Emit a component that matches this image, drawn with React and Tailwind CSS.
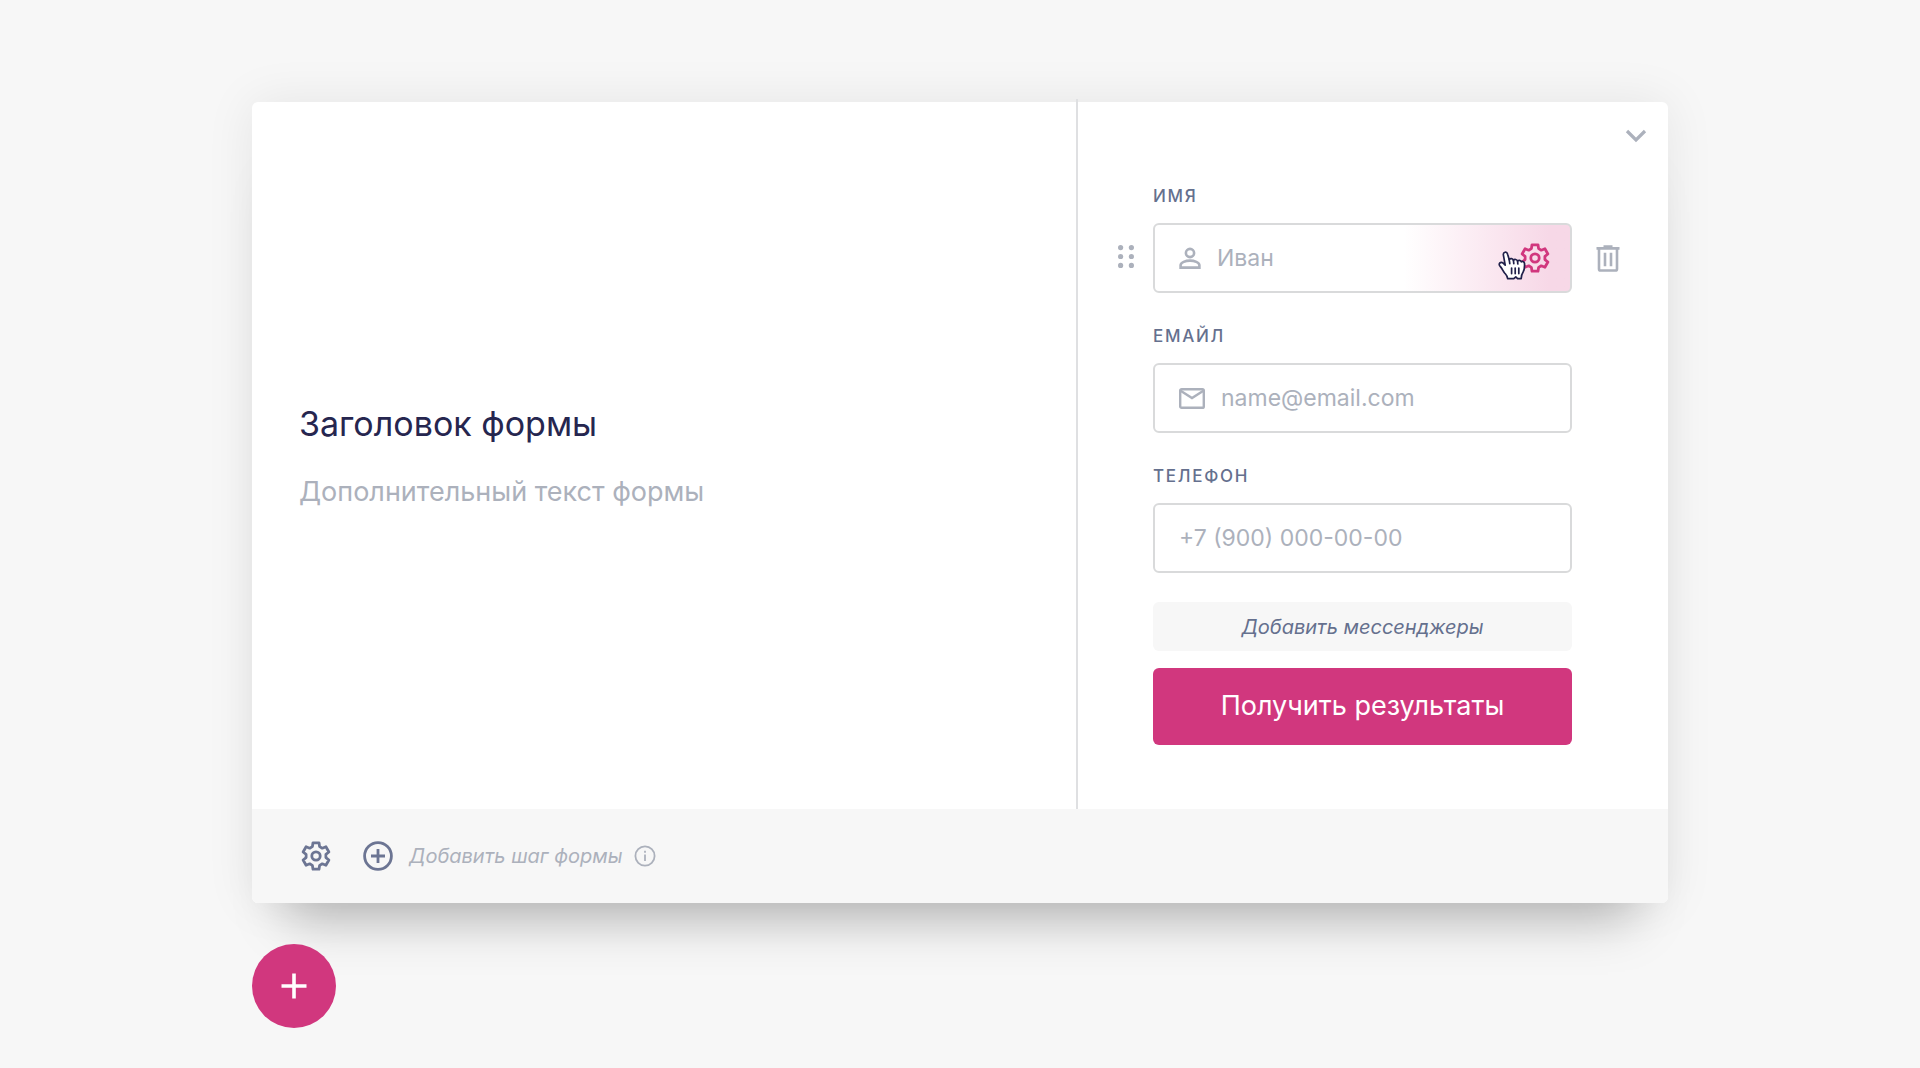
const ICON_GEAR =
  'M-3 -13.2H3L3.6 -9.4L6.3 -7.8L9.9 -9.2L12.9 -4L9.9 -1.6V1.6L12.9 4L9.9 9.2L6.3 7.8L3.6 9.4L3 13.2H-3L-3.6 9.4L-6.3 7.8L-9.9 9.2L-12.9 4L-9.9 1.6V-1.6L-12.9 -4L-9.9 -9.2L-6.3 -7.8L-3.6 -9.4Z'

function GearIcon({ className }) {
  return (
    <svg className={`h-[30px] w-[30px] ${className}`} viewBox="-15 -15 30 30" fill="none" stroke="currentColor" strokeWidth="2.8" strokeLinejoin="round">
      <path d={ICON_GEAR} />
      <circle r="4.2" />
    </svg>
  )
}

function UserIcon() {
  return (
    <svg className="h-6 w-[22px] shrink-0" viewBox="0 0 22 24" fill="none" stroke="currentColor" strokeWidth="2.6">
      <circle cx="11" cy="7" r="4.1" />
      <path d="M1.6 21.600v-2.400c0-2.800 5-4.600 9.400-4.600s9.400 1.800 9.400 4.600v2.400z" />
    </svg>
  )
}

function MailIcon() {
  return (
    <svg className="h-6 w-[26px] shrink-0" viewBox="0 0 26 24" fill="none" stroke="currentColor" strokeWidth="2.4">
      <rect x="1.2" y="3.200" width="23.600" height="18.600" rx="1.4" />
      <path d="M1.6 4.800L13 12l11.400-7.200" />
    </svg>
  )
}

function TrashIcon() {
  return (
    <svg className="h-[27px] w-6" viewBox="0 0 24 27" fill="none" stroke="currentColor" strokeWidth="2.6">
      <path d="M0.500 3.400h23M7.500 1.600h9" />
      <path d="M3 3.400v20.500a1.600 1.600 0 001.600 1.600h14.800a1.600 1.600 0 001.600-1.600V3.400" />
      <path d="M9 7.800v13.400M15 7.800v13.400" />
    </svg>
  )
}

function DragIcon() {
  return (
    <svg className="h-[23px] w-4" viewBox="0 0 16 23" fill="currentColor">
      {[2.6, 11.5, 20.4].map((y) => (
        <g key={y}>
          <circle cx="2.6" cy={y} r="2.6" />
          <circle cx="13.4" cy={y} r="2.6" />
        </g>
      ))}
    </svg>
  )
}

function HandCursor({ className }) {
  return (
    <svg className={`h-[30px] w-7 ${className}`} viewBox="0 0 28 30" fill="white" stroke="#20204a" strokeWidth="1.7" strokeLinejoin="round" strokeLinecap="round">
      <path d="M9.600 27.600c0-2.600-1.200-3.600-2.800-5.400-1.800-2.200-2.600-4.600-4.600-6.800-2.600-2.800.600-5.200 3-3.200l2 2L5.400 4.200C4.800.8 8.800 0 9.600 3.200L11.200 8.600c1.400-1.600 3.400-1 4.200.6 1.200-1.400 3.400-.8 4.200.8 1.200-1.200 3-.8 3.800.8 1.400-.8 2.900 0 3.100 1.600.2 3.400.1 6.400-1.500 8.800-1.400 2-1.800 3.400-1.800 6.400h-3.600l-1.800-1.800-2 1.800z" />
      <path d="M11.200 8.600l.6 4M15.400 9.200l.4 3.400M19.600 10l.2 3M13.600 17v5.600M17.200 17v5.600M20.800 17v5.600" fill="none" />
    </svg>
  )
}

function Field({ id, label, type, placeholder, icon, active }) {
  return (
    <div className="grid grid-cols-[75px_minmax(0,1fr)_96px] gap-y-[17px] items-center">
      <label htmlFor={id} className="col-start-2 text-[17px] leading-5 font-medium tracking-widest uppercase text-[#65708e]">
        {label}
      </label>

      {active && (
        <button type="button" aria-label="Переместить" className="col-start-1 row-start-2 justify-self-end mr-[19px] mb-1">
          <DragIcon />
        </button>
      )}

      <div
        className={`relative col-start-2 row-start-2 h-[70px] flex items-center gap-4 px-6 rounded-md border-2 border-[#d9dadb] ${
          active ? 'bg-linear-to-r from-white from-60% to-[#f7d8e7] to-95%' : 'bg-white'
        }`}
      >
        {icon}
        <input
          id={id}
          type={type}
          placeholder={placeholder}
          className="min-w-0 flex-1 bg-transparent text-[23px] text-[#26264f] placeholder:text-[#acb1bc] outline-none"
        />
        {active && (
          <>
            <button type="button" aria-label="Настройки поля" className="-mr-1 text-[#d1377e]">
              <GearIcon />
            </button>
            <HandCursor className="absolute right-11 top-[26px] pointer-events-none" />
          </>
        )}
      </div>

      {active && (
        <button type="button" aria-label="Удалить" className="col-start-3 row-start-2 ml-6 justify-self-start">
          <TrashIcon />
        </button>
      )}
    </div>
  )
}

export default function App() {
  return (
    <main className="min-h-screen bg-[#f7f7f7] px-6 pt-[102px] pb-10 font-['Inter',sans-serif] text-[#acb1bc]">
      <div className="mx-auto w-full max-w-[1416px]">
        <section className="rounded-md bg-white shadow-[0_50px_50px_-35px_rgba(0,0,0,0.26),0_0_50px_rgba(0,0,0,0.08)]">
          <div className="flex">
            <div className="flex-1 flex flex-col justify-center gap-8 px-[47px]">
              <h1 className="text-[34px] leading-10 text-[#26264f]">Заголовок формы</h1>
              <p className="text-[27px] leading-8">Дополнительный текст формы</p>
            </div>

            {/* Form preview */}
            <form className="-mt-[3px] w-[592px] border-l-2 border-[#dfe0e2] pt-6 pb-16">
              <div className="flex justify-end pr-5 mb-[39px]">
                <button type="button" aria-label="Свернуть" className="h-6">
                  <svg className="h-6 w-6" viewBox="0 0 24 24" fill="none" stroke="currentColor" strokeWidth="3.2">
                    <path d="M3 8l9 9 9-9" />
                  </svg>
                </button>
              </div>

              <div className="flex flex-col gap-[33px]">
                <Field id="name" label="Имя" type="text" placeholder="Иван" icon={<UserIcon />} active />
                <Field id="email" label="Емайл" type="email" placeholder="name@email.com" icon={<MailIcon />} />
                <Field id="phone" label="Телефон" type="tel" placeholder="+7 (900) 000-00-00" />
              </div>

              <div className="mt-[29px] ml-[75px] mr-24 flex flex-col gap-[17px]">
                <button type="button" className="h-[49px] rounded-md bg-[#f7f7f7] text-xl italic text-[#65708e]">
                  Добавить мессенджеры
                </button>
                <button type="submit" className="h-[77px] rounded-md bg-[#d1377e] text-[27px] text-white">
                  Получить результаты
                </button>
              </div>
            </form>
          </div>

          {/* Step toolbar */}
          <footer className="flex h-[94px] items-center rounded-b-md bg-[#f7f7f7] px-[49px]">
            <button type="button" aria-label="Настройки формы" className="text-[#6c7593]">
              <GearIcon />
            </button>
            <button type="button" className="ml-8 flex items-center gap-4 text-xl italic">
              <svg className="h-[30px] w-[30px] text-[#6c7593]" viewBox="0 0 30 30" fill="none" stroke="currentColor" strokeWidth="2.8">
                <circle cx="15" cy="15" r="13.4" />
                <path d="M15 8v14M8 15h14" />
              </svg>
              Добавить шаг формы
            </button>
            <button type="button" aria-label="Подсказка" className="ml-3">
              <svg className="h-[22px] w-[22px]" viewBox="0 0 22 22" fill="none" stroke="currentColor" strokeWidth="1.8">
                <circle cx="11" cy="11" r="9.6" />
                <path d="M11 9.500v6.500M11 5.800v2" />
              </svg>
            </button>
          </footer>
        </section>

        <button type="button" aria-label="Добавить" className="mt-[41px] flex h-[84px] w-[84px] items-center justify-center rounded-full bg-[#d1377e] text-white">
          <svg className="h-[26px] w-[26px]" viewBox="0 0 26 26" fill="none" stroke="currentColor" strokeWidth="3.6">
            <path d="M13 0.500v25M0.500 13h25" />
          </svg>
        </button>
      </div>
    </main>
  )
}
